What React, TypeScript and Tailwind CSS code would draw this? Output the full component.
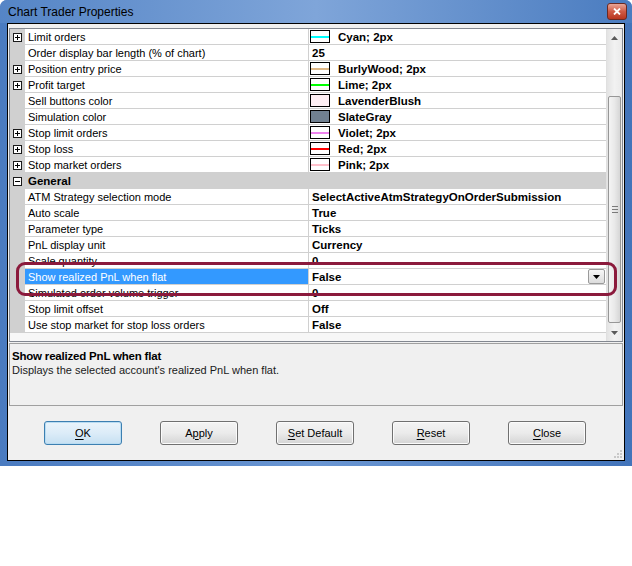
import React from 'react';

type Swatch = { color: string; line?: boolean };
type Row = {
  label: string;
  value?: string;
  expand?: boolean;
  swatch?: Swatch;
  category?: boolean;
  selected?: boolean;
};

const rows: Row[] = [
  { label: 'Limit orders', expand: true, swatch: { color: '#00ffff', line: true }, value: 'Cyan; 2px' },
  { label: 'Order display bar length (% of chart)', value: '25' },
  { label: 'Position entry price', expand: true, swatch: { color: '#deb887', line: true }, value: 'BurlyWood; 2px' },
  { label: 'Profit target', expand: true, swatch: { color: '#00ff00', line: true }, value: 'Lime; 2px' },
  { label: 'Sell buttons color', swatch: { color: '#fff0f5' }, value: 'LavenderBlush' },
  { label: 'Simulation color', swatch: { color: '#708090' }, value: 'SlateGray' },
  { label: 'Stop limit orders', expand: true, swatch: { color: '#ee82ee', line: true }, value: 'Violet; 2px' },
  { label: 'Stop loss', expand: true, swatch: { color: '#ff0000', line: true }, value: 'Red; 2px' },
  { label: 'Stop market orders', expand: true, swatch: { color: '#ffc0cb', line: true }, value: 'Pink; 2px' },
  { label: 'General', category: true },
  { label: 'ATM Strategy selection mode', value: 'SelectActiveAtmStrategyOnOrderSubmission' },
  { label: 'Auto scale', value: 'True' },
  { label: 'Parameter type', value: 'Ticks' },
  { label: 'PnL display unit', value: 'Currency' },
  { label: 'Scale quantity', value: '0' },
  { label: 'Show realized PnL when flat', value: 'False', selected: true },
  { label: 'Simulated order volume trigger', value: '0' },
  { label: 'Stop limit offset', value: 'Off' },
  { label: 'Use stop market for stop loss orders', value: 'False' },
];

const ExpandBox: React.FC<{ open?: boolean }> = ({ open }) => (
  <div className="w-[9px] h-[9px] border border-[#1a1a1a] bg-white relative">
    <div className="absolute left-[1px] right-[1px] top-[3px] h-[1px] bg-black" />
    {!open && <div className="absolute top-[1px] bottom-[1px] left-[3px] w-[1px] bg-black" />}
  </div>
);

const SwatchBox: React.FC<{ s: Swatch }> = ({ s }) => (
  <div
    className="w-[20px] h-[13px] border border-black ml-[1px] mr-[8px] flex items-center shrink-0"
    style={{ background: s.line ? '#ffffff' : s.color }}
  >
    {s.line && <div className="w-full h-[2px]" style={{ background: s.color }} />}
  </div>
);

const GridRow: React.FC<{ row: Row }> = ({ row }) => {
  if (row.category) {
    return (
      <div className="flex h-[16px] bg-[#d0d0d0]">
        <div className="w-[15px] flex items-center justify-center">
          <ExpandBox open />
        </div>
        <div className="pl-[3px] pt-[1px] font-bold text-[11.5px] leading-[15px]">{row.label}</div>
      </div>
    );
  }
  return (
    <div className="flex h-[16px]">
      <div className="w-[15px] bg-[#d0d0d0] flex items-center justify-center">
        {row.expand && <ExpandBox />}
      </div>
      <div
        className={
          'w-[284px] border-r border-b border-[#d0d0d0] pl-[3px] pt-[1px] text-[11px] leading-[14px] whitespace-nowrap overflow-hidden ' +
          (row.selected ? 'bg-[#3399ff] text-white' : 'bg-white text-black')
        }
      >
        {row.label}
      </div>
      <div className="flex-1 border-b border-[#d0d0d0] bg-white flex items-center text-[11.5px] font-bold leading-[15px] whitespace-nowrap">
        {row.swatch ? <SwatchBox s={row.swatch} /> : <span className="w-[3px]" />}
        <span className="pt-[1px]">{row.value}</span>
        {row.selected && (
          <div className="ml-auto mr-[1px] w-[17px] h-[15px] border border-[#9a9a9a] rounded-[2px] bg-gradient-to-b from-[#f7f7f7] to-[#dcdcdc] flex items-center justify-center">
            <svg width="7" height="4" viewBox="0 0 7 4">
              <path d="M0 0h7L3.5 4z" fill="#000" />
            </svg>
          </div>
        )}
      </div>
    </div>
  );
};

const ScrollBar: React.FC = () => (
  <div className="w-[16px] flex flex-col bg-gradient-to-r from-[#e3e3e3] via-[#f2f2f2] to-[#eaeaea] border-l border-[#e0e0e0]">
    <div className="h-[17px] flex items-center justify-center">
      <svg width="7" height="4" viewBox="0 0 7 4">
        <path d="M0 4h7L3.5 0z" fill="#5a5a5a" />
      </svg>
    </div>
    <div className="h-[50px]" />
    <div className="h-[227px] mx-[1px] border border-[#979797] rounded-[2px] bg-gradient-to-r from-[#f4f4f4] via-[#e9e9e9] to-[#d6d6d6] flex flex-col items-center justify-center gap-[2px]">
      <div className="w-[6px] h-[1px] bg-[#7a7a7a]" />
      <div className="w-[6px] h-[1px] bg-[#7a7a7a]" />
      <div className="w-[6px] h-[1px] bg-[#7a7a7a]" />
    </div>
    <div className="flex-1" />
    <div className="h-[17px] flex items-center justify-center">
      <svg width="7" height="4" viewBox="0 0 7 4">
        <path d="M0 0h7L3.5 4z" fill="#5a5a5a" />
      </svg>
    </div>
  </div>
);

const Btn: React.FC<{ pre?: string; u: string; post?: string; primary?: boolean }> = ({ pre, u, post, primary }) => (
  <div
    className={
      'w-[78px] h-[24px] rounded-[3px] border flex items-center justify-center text-[11px] text-black ' +
      (primary
        ? 'border-[#3c7fb1] bg-gradient-to-b from-[#eaf4fb] via-[#dcecf8] to-[#c6e0f2] shadow-[inset_0_0_0_1px_#b9dcf2]'
        : 'border-[#707070] bg-gradient-to-b from-[#f4f4f4] via-[#ebebeb] to-[#d4d4d4] shadow-[inset_0_0_0_1px_#fbfbfb]')
    }
  >
    {pre}
    <span className="underline underline-offset-[2px]">{u}</span>
    {post}
  </div>
);

export default function App() {
  return (
    <div className="w-[632px] h-[566px] bg-white" style={{ fontFamily: '"Liberation Sans", Arial, sans-serif' }}>
      <div className="w-[632px] h-[466px] rounded-t-[7px] bg-gradient-to-r from-[#4a7bc0] via-[#6a96d2] to-[#4274ba] flex flex-col">
        {/* title bar */}
        <div className="h-[23px] flex items-center justify-between pl-[8px] pr-[5px] bg-gradient-to-r from-[#5585c6] via-[#7fa5d9] to-[#4a7cc0] rounded-t-[7px]">
          <span className="text-[12px] text-black">Chart Trader Properties</span>
          <div className="w-[20px] h-[17px] rounded-[3px] border border-[#6b2a23] bg-gradient-to-b from-[#e8a597] via-[#cf5a45] to-[#b8361f] flex items-center justify-center">
            <svg width="8" height="7" viewBox="0 0 8 7">
              <path d="M1 0.5L7 6.5M7 0.5L1 6.5" stroke="#fff" strokeWidth="1.8" />
            </svg>
          </div>
        </div>

        {/* client area */}
        <div className="mx-[7px] mb-[5px] flex-1 border border-black bg-[#f0f0f0] flex flex-col relative">
          <div className="mx-[1px] mt-[4px] h-[314px] border border-[#828790] bg-white flex relative">
            <div className="flex-1 flex flex-col">
              {rows.map((r) => (
                <GridRow key={r.label} row={r} />
              ))}
              <div className="flex-1 bg-[#f7f7f7]" />
            </div>
            <ScrollBar />
            <div className="absolute left-[6px] top-[233px] w-[601px] h-[34px] rounded-[9px] border-[3px] border-[#8b1a3c]" />
          </div>

          <div className="mx-[1px] mt-[1px] h-[63px] border border-[#a0a0a0] bg-[#f0f0f0] px-[2px] pt-[5px]">
            <div className="text-[11.5px] font-bold leading-[14px] tracking-[-0.2px]">Show realized PnL when flat</div>
            <div className="text-[11px] leading-[15px] text-[#1a1a1a]">Displays the selected account's realized PnL when flat.</div>
          </div>

          <div className="flex-1 flex items-start pt-[15px] pl-[36px] gap-[38px]">
            <Btn u="O" post="K" primary />
            <Btn pre="A" u="p" post="ply" />
            <Btn u="S" post="et Default" />
            <Btn u="R" post="eset" />
            <Btn u="C" post="lose" />
          </div>

          <svg className="absolute right-[2px] bottom-[2px]" width="9" height="9" viewBox="0 0 9 9">
            <rect x="7" y="1" width="2" height="2" fill="#c8c8c8" />
            <rect x="4" y="4" width="2" height="2" fill="#c8c8c8" />
            <rect x="7" y="4" width="2" height="2" fill="#c8c8c8" />
            <rect x="1" y="7" width="2" height="2" fill="#c8c8c8" />
            <rect x="4" y="7" width="2" height="2" fill="#c8c8c8" />
            <rect x="7" y="7" width="2" height="2" fill="#c8c8c8" />
          </svg>
        </div>
      </div>
    </div>
  );
}
